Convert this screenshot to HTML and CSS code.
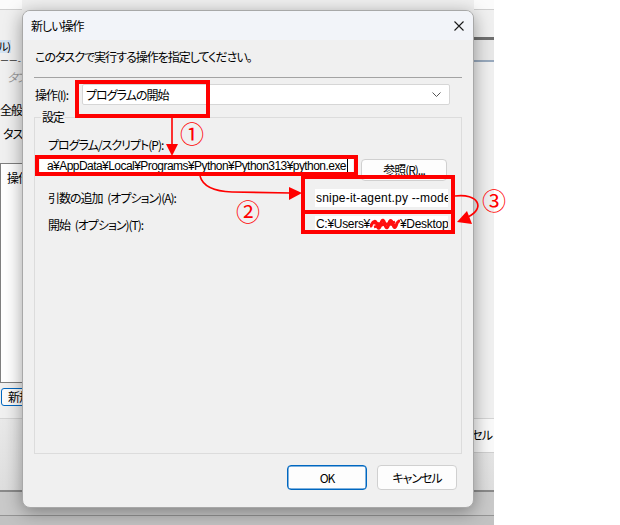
FILE: index.html
```html
<!DOCTYPE html>
<html lang="ja">
<head>
<meta charset="utf-8">
<title>新しい操作</title>
<link rel="stylesheet" href="styles.css">
</head>
<body>
<div class="screen">
  <div class="bgwin">
    <div class="bg-main">
      <div class="bg-left">
        <div class="bl-top"></div>
        <div class="bl-help">ル)</div>
        <div class="bl-dash">ー ー -</div>
        <div class="bl-tab">タブ</div>
        <div class="bl-general">全般</div>
        <div class="bl-task">タスク</div>
        <div class="bl-box"><span>操作</span></div>
        <div class="bl-new">新規</div>
      </div>
      <div class="bg-mid"></div>
      <div class="bg-right">
        <div class="br-top"></div>
        <div class="br-band"></div>
        <div class="br-band2"></div>
      </div>
    </div>
    <div class="bg-foot">
      <div class="foot-bar"><div class="bg-cancel">キャンセル</div></div>
      <div class="foot-mid"></div>
      <div class="foot-low"></div>
    </div>
  </div>

  <div class="dialog">
    <div class="titlebar">
      <span class="title">新しい操作</span>
      <svg class="close" width="10" height="10" viewBox="0 0 10 10"><path d="M0.5 0.5L9.5 9.5M9.5 0.5L0.5 9.5" stroke="#1a1a1a" stroke-width="1.1" fill="none"/></svg>
    </div>
    <div class="dbody">
      <p class="intro">このタスクで実行する操作を指定してください。</p>
      <div class="sep"></div>
      <div class="action-row">
        <span class="action-label">操作(I):</span>
        <div class="combo">
          <span>プログラムの開始</span>
          <svg class="chev" width="9" height="5" viewBox="0 0 9 5"><path d="M0.5 0.5L4.5 4.5L8.5 0.5" stroke="#555" stroke-width="1" fill="none"/></svg>
        </div>
      </div>
      <div class="group">
        <div class="legend">設定</div>
        <div class="lbl-prog">プログラム/スクリプト(P):</div>
        <div class="path-row">
          <div class="path-field">a¥AppData¥Local¥Programs¥Python¥Python313¥python.exe<span class="caret"></span></div>
          <div class="btn browse">参照(R)...</div>
        </div>
        <div class="opt-row args">
          <span class="opt-label">引数の追加 (オプション)(A):</span>
          <div class="opt-field">snipe-it-agent.py --mode</div>
        </div>
        <div class="opt-row start">
          <span class="opt-label">開始 (オプション)(T):</span>
          <div class="opt-field">C:¥Users¥<svg class="scribble" width="30" height="14" viewBox="0 0 30 14"><path d="M1 9 C3 3,6 3,7 8 C8 13,10 12,11 6 C12 2,14 2,15 8 C16 12,18 12,19 6 C20 2,22 3,23 8 C24 12,26 11,27 6 L29 4" stroke="#ff1010" stroke-width="3" fill="none" stroke-linecap="round"/><path d="M3 6 L27 8 M4 10 L25 5" stroke="#ff1010" stroke-width="2.5" fill="none"/></svg>¥Desktop¥</div>
        </div>
      </div>
      <div class="buttons">
        <div class="btn ok">OK</div>
        <div class="btn cancel">キャンセル</div>
      </div>
    </div>
  </div>

  <div class="annot">
    <div class="rbox box-action"></div>
    <div class="rbox box-path"></div>
    <div class="rbox box-opt"><div class="rdiv"></div></div>
    <svg class="arrows" width="620" height="525" viewBox="0 0 620 525">
      <path d="M172 118 L172 146" stroke="#ff0000" stroke-width="1.6" fill="none"/>
      <polygon points="166,144 178,144 172,156" fill="#ff0000"/>
      <path d="M200 176 Q204 191 232 192 L291 193" stroke="#ff0000" stroke-width="1.6" fill="none"/>
      <polygon points="289,187 289,200 302,193" fill="#ff0000"/>
      <path d="M455 196 C478 193, 486 208, 468 217" stroke="#ff0000" stroke-width="1.6" fill="none"/>
      <polygon points="457,222 467,211 472,224" fill="#ff0000"/>
    </svg>
    <span class="num n1">①</span>
    <span class="num n2">②</span>
    <span class="num n3">③</span>
  </div>
</div>
</body>
</html>
```

FILE: styles.css
```css
* { box-sizing: border-box; margin: 0; padding: 0; }

body {
  width: 620px;
  height: 525px;
  overflow: hidden;
  background: #ffffff;
  font-family: "Noto Sans CJK JP", "Noto Sans", sans-serif;
  font-size: 12px;
  line-height: 16px;
  letter-spacing: -1px;
  color: #000;
  font-feature-settings: "palt";
}

.screen { position: relative; width: 620px; height: 525px; }

/* ---------- background window ---------- */
.bgwin {
  width: 494px;
  height: 525px;
  display: flex;
  flex-direction: column;
  background: #f0f0f0;
}
.bg-main { height: 418px; display: flex; }
.bg-left { width: 22px; overflow: hidden; white-space: nowrap; }
.bg-mid { flex: 1; }
.bg-right { width: 20px; overflow: hidden; }

.bl-top, .br-top { height: 10px; background: #fbfbfb; border-bottom: 1px solid #cfcfcf; }
.bl-help {
  margin-top: 30px;
  width: 11px;
  height: 13px;
  background: #d3e3f2;
  font-size: 11px;
  line-height: 13px;
  text-indent: -2px;
  overflow: hidden;
}
.bl-dash { margin-top: 4px; height: 7px; line-height: 7px; font-size: 9px; color: #333; overflow: hidden; }
.bl-tab { margin-top: 5px; padding-left: 7px; color: #9a9a9a; font-style: italic; }
.bl-general { margin-top: 17px; }
.bl-task { margin-top: 8px; padding-left: 3px; }
.bl-box {
  margin-top: 21px;
  height: 220px;
  background: #ffffff;
  border: 1px solid #7f7f7f;
  border-right: none;
  padding: 6px 0 0 6px;
}
.bl-new {
  margin-top: 5px;
  margin-left: 1px;
  width: 30px;
  height: 18px;
  border: 1px solid #0067c0;
  border-radius: 3px;
  background: #fbfbfb;
  padding-left: 6px;
  line-height: 16px;
}
.br-band { margin-top: 27px; height: 23px; border-top: 3px solid #6f6f6f; background: #e8e8e8; }
.br-band2 { height: 2px; background: #98a9bd; }

.bg-foot { flex: 1; display: flex; flex-direction: column; }
.foot-bar {
  height: 74px;
  border-top: 1px solid #d4d4d4;
  border-bottom: 2px solid #8a8a8a;
  background: linear-gradient(#e9e9e9, #dedede);
  display: flex;
  justify-content: flex-end;
  align-items: flex-start;
}
.bg-cancel {
  width: 60px;
  height: 34px;
  background: #f9f9f9;
  border-bottom: 1px solid #cfcfcf;
  text-align: right;
  padding-right: 2px;
  line-height: 31px;
  white-space: nowrap;
  overflow: hidden;
}
.foot-mid { height: 24px; background: #c9c9c9; border-bottom: 1px solid #939393; }
.foot-low { flex: 1; background: #c2c2c2; }

/* ---------- dialog ---------- */
.dialog {
  position: absolute;
  left: 22px;
  top: 10px;
  width: 452px;
  height: 498px;
  background: #f0f0f0;
  border: 1px solid #a8a8a8;
  border-radius: 8px;
  box-shadow: 0 4px 18px rgba(0, 0, 0, 0.38);
  overflow: hidden;
  display: flex;
  flex-direction: column;
}
.titlebar {
  height: 29px;
  flex: none;
  background: #f2f4f9;
  display: flex;
  align-items: center;
  justify-content: space-between;
  padding: 0 9px 0 8px;
}
.close { display: block; }

.dbody { flex: 1; display: flex; flex-direction: column; padding: 9px 11px 0 11px; }
.intro { margin-left: 1px; }
.sep { margin-top: 12px; height: 1px; background: #a3a3a3; }

.action-row { margin-top: 6px; height: 21px; display: flex; align-items: center; }
.action-label { width: 47px; margin-left: 1px; }
.combo {
  flex: 1;
  margin-right: 12px;
  height: 21px;
  background: #ffffff;
  border: 1px solid #d6d6d6;
  border-radius: 2px;
  display: flex;
  align-items: center;
  justify-content: space-between;
  padding: 0 8px 0 3px;
}
.chev { display: block; }

.group {
  margin-top: 12px;
  height: 337px;
  border: 1px solid #dcdcdc;
  padding: 0 13px;
}
.legend {
  width: fit-content;
  margin: -9px 0 0 -7px;
  padding: 0 1px;
  background: #f0f0f0;
}
.lbl-prog { margin-top: 12px; }
.path-row { margin-top: 5px; display: flex; align-items: flex-start; }
.path-field, .opt-field {
  font-family: "Liberation Sans", "Noto Sans CJK JP", sans-serif;
  background: #ffffff;
  white-space: nowrap;
  overflow: hidden;
}
.path-field {
  margin-left: -8px;
  width: 313px;
  height: 17px;
  padding-left: 7px;
  line-height: 17px;
  letter-spacing: -0.55px;
}
.caret { display: inline-block; width: 1px; height: 13px; background: #000; vertical-align: -2px; margin-left: 1px; }

.btn {
  background: #fdfdfd;
  border: 1px solid #d0d0d0;
  border-radius: 4px;
  display: flex;
  align-items: center;
  justify-content: center;
}
.browse { margin-left: 8px; margin-top: 1px; width: 86px; height: 22px; }

.opt-row { display: flex; align-items: center; }
.opt-row.args { margin-top: 8px; }
.opt-row.start { margin-top: 9px; }
.opt-label { word-spacing: 3px; }
.opt-field {
  margin-left: auto;
  width: 133px;
  height: 18px;
  padding-left: 1px;
  line-height: 18px;
  letter-spacing: 0.2px;
}
.opt-row.start .opt-field { height: 17px; line-height: 17px; letter-spacing: -0.3px; }
.scribble { display: inline-block; vertical-align: -3px; }

.buttons { margin-top: 11px; margin-right: 5px; display: flex; justify-content: flex-end; gap: 10px; }
.buttons .btn { width: 80px; height: 25px; }
.btn.ok { border-color: #0067c0; box-shadow: inset 0 0 0 0.5px #0067c0; }

/* ---------- annotations ---------- */
.annot { position: absolute; left: 0; top: 0; width: 620px; height: 525px; pointer-events: none; }
.rbox { position: absolute; border: 4px solid #ff0000; }
.box-action { left: 75px; top: 80px; width: 135px; height: 38px; }
.box-path { left: 35px; top: 155px; width: 323px; height: 21px; }
.box-opt { left: 301px; top: 175px; width: 154px; height: 59px; }
.rdiv { position: absolute; left: 0; right: 0; top: 31px; height: 4px; background: #ff0000; }
.arrows { position: absolute; left: 0; top: 0; }
.num {
  position: absolute;
  color: #ff0000;
  font-size: 24px;
  line-height: 24px;
  letter-spacing: 0;
  font-feature-settings: normal;
}
.n1 { left: 180px; top: 121px; }
.n2 { left: 236px; top: 199px; }
.n3 { left: 482px; top: 188px; }
```
